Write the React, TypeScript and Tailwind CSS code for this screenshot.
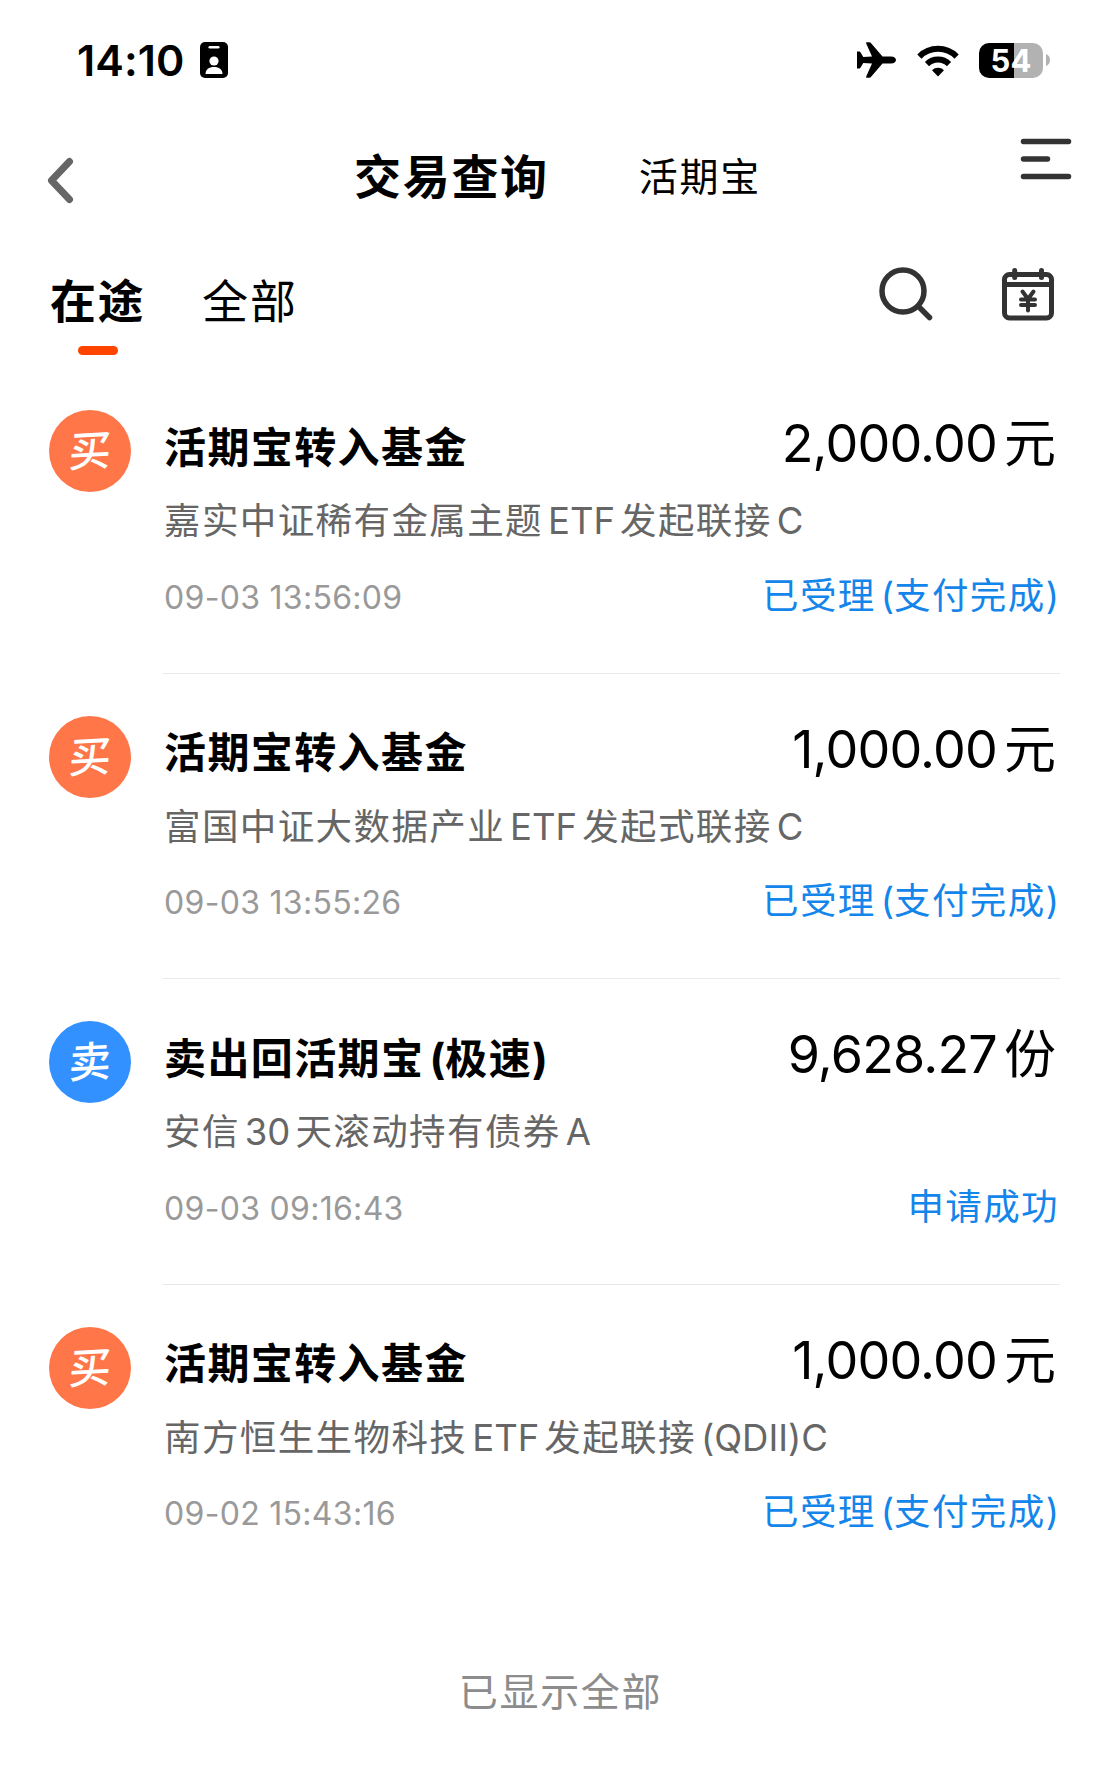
import clsx from "clsx"

interface Trade {
  type: "buy" | "sell"
  title: string
  amount: string
  unit: string
  fund: string
  time: string
  status: string
}

const TRADES: Trade[] = [
  {
    type: "buy",
    title: "活期宝转入基金",
    amount: "2,000.00",
    unit: "元",
    fund: "嘉实中证稀有金属主题ETF发起联接C",
    time: "09-03 13:56:09",
    status: "已受理(支付完成)",
  },
  {
    type: "buy",
    title: "活期宝转入基金",
    amount: "1,000.00",
    unit: "元",
    fund: "富国中证大数据产业ETF发起式联接C",
    time: "09-03 13:55:26",
    status: "已受理(支付完成)",
  },
  {
    type: "sell",
    title: "卖出回活期宝(极速)",
    amount: "9,628.27",
    unit: "份",
    fund: "安信30天滚动持有债券A",
    time: "09-03 09:16:43",
    status: "申请成功",
  },
  {
    type: "buy",
    title: "活期宝转入基金",
    amount: "1,000.00",
    unit: "元",
    fund: "南方恒生生物科技ETF发起联接(QDII)C",
    time: "09-02 15:43:16",
    status: "已受理(支付完成)",
  },
]

// adds a small gap where latin runs meet chinese text
const MixedText = ({ text }: { text: string }) => {
  const parts = text.split(/([\x20-\x7e]+)/).filter(Boolean)
  return (
    <>
      {parts.map((part, i) => {
        const latin = /^[\x20-\x7e]/.test(part)
        return (
          <span
            key={i}
            className={clsx(
              latin && "tracking-normal",
              latin && !part.startsWith(")") && "ml-[5px]",
              latin && !/[()]$/.test(part) && i < parts.length - 1 && "mr-[5px]"
            )}
          >
            {part}
          </span>
        )
      })}
    </>
  )
}

const StatusBar = () => {
  return (
    <div className="flex h-[120px] items-center justify-between pl-[77px] pr-[57px]">
      <div className="flex items-center gap-[15px]">
        <span className="text-[43px] font-semibold leading-none tracking-[0.100px]">14:10</span>
        <svg width="28" height="36" viewBox="0 0 28 36">
          <rect width="28" height="36" rx="5" fill="#000" />
          <rect x="8.500" y="4" width="11" height="2.600" rx="1.300" fill="#fff" />
          <circle cx="14" cy="19" r="4.600" fill="#fff" />
          <path d="M5.500 32c0-4.500 3.500-7 8.500-7s8.500 2.500 8.500 7z" fill="#fff" />
        </svg>
      </div>
      <div className="flex items-center">
        <svg width="40" height="36" viewBox="0 0 40 36">
          <path
            d="M0 9.500h2.200c.6 0 1 .2 1.300.7L6.300 15l8.700-.4L9.200 1.600C8.900.8 9.300.3 10 .3h2.400c.6 0 1.100.2 1.500.7L25.500 14.500H34c3 0 5 1.600 5 3.500s-2 3.500-5 3.500h-8.500L13.900 35c-.4.5-.9.700-1.500.7H10c-.7 0-1.100-.5-.8-1.300L15 21.400 6.300 21l-2.800 4.800c-.3.500-.7.700-1.300.7H0z"
            fill="#000"
          />
        </svg>
        <svg className="ml-[19px]" width="44" height="33" viewBox="0 0 44 33">
          <path d="M3.400 12.600a26.200 26.200 0 0 1 37.200 0" fill="none" stroke="#000" strokeWidth="6" />
          <path d="M11 20.200a15.500 15.500 0 0 1 22 0" fill="none" stroke="#000" strokeWidth="6" />
          <path d="M22 32.500l-6-6.200a8.600 8.600 0 0 1 12 0z" fill="#000" />
        </svg>
        <div className="ml-[19px] flex h-[35px] w-[64px] items-center justify-center rounded-[10px] bg-[linear-gradient(to_right,#000_54%,#b2b2b2_54%)]">
          <span className="text-[31px] font-bold leading-none text-white">54</span>
        </div>
        <svg className="ml-[3px]" width="4" height="12" viewBox="0 0 4 12">
          <path d="M0 0c2.500 1 4 3.200 4 6s-1.500 5-4 6z" fill="#b2b2b2" />
        </svg>
      </div>
    </div>
  )
}

const Header = () => {
  return (
    <header className="flex h-[114px] items-start pl-[47px] pr-[35px]">
      <svg className="mt-[37px]" width="27" height="47" viewBox="0 0 27 47">
        <path
          d="M22.500 4.500L4.500 23.500l18 19"
          fill="none"
          stroke="#666"
          strokeWidth="7"
          strokeLinecap="round"
          strokeLinejoin="round"
        />
      </svg>
      <h1 className="ml-[280px] mt-[27px] text-[47px] font-bold leading-[60px] tracking-[1.700px]">交易查询</h1>
      <span className="ml-[90px] mt-[27px] text-[39px] leading-[60px] tracking-[1.700px]">活期宝</span>
      <svg className="ml-auto mt-[18px]" width="52" height="42" viewBox="0 0 52 42">
        <path d="M3.500 3.500h45M3.500 21h24M3.500 38.500h45" stroke="#333" strokeWidth="5.500" strokeLinecap="round" />
      </svg>
    </header>
  )
}

const Tabs = () => {
  return (
    <div className="flex h-[134px] items-start pl-[50px] pr-[52px]">
      <div className="flex flex-col items-center">
        <span className="mt-[37px] text-[46px] font-bold leading-[60px] tracking-[1.500px]">在途</span>
        <span className="ml-px mt-[15px] h-[9px] w-[40px] rounded-full bg-[#ff4400]" />
      </div>
      <span className="ml-[57px] mt-[37px] text-[46px] leading-[60px] tracking-[1.900px]">全部</span>
      <svg className="ml-auto mt-[32px]" width="56" height="56" viewBox="0 0 56 56">
        <circle cx="25" cy="25" r="21" fill="none" stroke="#333" strokeWidth="5.500" />
        <path d="M40.500 40.500L51.500 51.500" stroke="#333" strokeWidth="5.500" strokeLinecap="round" />
      </svg>
      <svg
        className="ml-[67px] mt-[33px]"
        width="54"
        height="54"
        viewBox="0 0 54 54"
        fill="none"
        stroke="#333"
        strokeWidth="5"
        strokeLinecap="round"
      >
        <rect x="3.500" y="7.500" width="47" height="43.500" rx="5" />
        <path d="M4 17.500h46" strokeLinecap="butt" />
        <path d="M13.700 3.500v7M40.500 3.500v7" />
        <path d="M21.500 24.500l5.500 7.500 5.500-7.500M20 32.500h14M20 38h14M27 32v11.500" strokeWidth="4" />
      </svg>
    </div>
  )
}

const TradeItem = ({ trade, last }: { trade: Trade; last: boolean }) => {
  return (
    <li className="flex h-[305.500px] pl-[49px] pr-[47px] pt-[42px]">
      <div
        className={clsx(
          "flex size-[82px] shrink-0 items-center justify-center rounded-full",
          trade.type === "buy" ? "bg-[#ff7648]" : "bg-[#3390ff]"
        )}
      >
        <span className="-rotate-3 -skew-x-6 text-[42px] font-medium leading-none text-white">
          {trade.type === "buy" ? "买" : "卖"}
        </span>
      </div>
      <div className={clsx("ml-[32px] flex-1 pr-[3px]", !last && "border-b border-[#e9e9e9]")}>
        <div className="flex h-[74px] items-center justify-between">
          <h3 className="pl-px text-[42px] font-bold tracking-[1.400px]">
            <MixedText text={trade.title} />
          </h3>
          <p className="flex items-center pb-[6px] pr-px text-[52px] leading-none">
            <span className="tracking-[-0.800px]">{trade.amount}</span>
            <span className="ml-[7px]">{trade.unit}</span>
          </p>
        </div>
        <p className="flex h-[74px] items-center pl-px pt-px text-[36.500px] tracking-[1.400px] text-[#666]">
          <span>
            <MixedText text={trade.fund} />
          </span>
        </p>
        <div className="flex h-[76px] items-center justify-between">
          <span className="pl-px pt-[3px] text-[32px] tracking-[0.300px] text-[#999]">{trade.time}</span>
          <span className="-mr-[2px] text-[36.500px] tracking-[1.400px] text-[#1485ea]">
            <MixedText text={trade.status} />
          </span>
        </div>
      </div>
    </li>
  )
}

export default function App() {
  return (
    <main className="h-[1786px] w-[1107px] overflow-hidden bg-white font-['Inter','Noto_Sans_CJK_SC',sans-serif] text-black">
      <StatusBar />
      <Header />
      <Tabs />
      <ul>
        {TRADES.map((trade, i) => (
          <TradeItem key={i} trade={trade} last={i === TRADES.length - 1} />
        ))}
      </ul>
      <p className="mt-[72px] pl-[14px] text-center text-[39px] leading-[60px] tracking-[1.700px] text-[#8c8c8c]">
        已显示全部
      </p>
    </main>
  )
}
